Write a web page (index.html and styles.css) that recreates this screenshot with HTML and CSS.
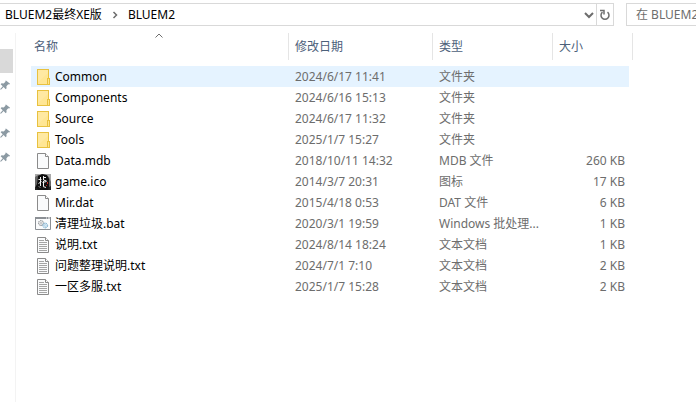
FILE: index.html
```html
<!DOCTYPE html>
<html lang="zh-CN">
<head>
    <meta charset="UTF-8">
    <meta name="viewport" content="width=device-width, initial-scale=1.0">
    <title>BLUEM2</title>
    <link rel="stylesheet" href="styles.css">
</head>
<body>

<!-- Shared icons -->
<svg class="sprite" aria-hidden="true">
    <symbol id="folder" viewBox="0 0 16 16">
        <path d="M2 0h12v9h1v7H2z" fill="#e8c13f"/>
        <path d="M3 1h10v8h-1v6H3z" fill="#ffe694"/>
        <path d="M3 1h10v3L3 13z" fill="#ffe9a2"/>
        <path d="M13 10h1v5h-1z" fill="#ffe48c"/>
    </symbol>
    <symbol id="page" viewBox="0 0 16 16">
        <path d="M2.500 .5h8l3 3v12h-11z" fill="#fafbfc" stroke="#8b8b8b"/>
        <path d="M10.500 .5v3h3" fill="#fff" stroke="#8b8b8b"/>
    </symbol>
    <symbol id="text" viewBox="0 0 16 16">
        <path d="M2.500 .5h8l3 3v12h-11z" fill="#fafbfc" stroke="#8b8b8b"/>
        <path d="M10.500 .5v3h3" fill="#fff" stroke="#8b8b8b"/>
        <path d="M4 3.500h5M4 5.500h8M4 7.500h8M4 9.500h8M4 11.500h8M4 13.500h8" stroke="#a5a5a5" fill="none"/>
    </symbol>
    <symbol id="batch" viewBox="0 0 16 16">
        <path d="M.5 1.500h15v12H.5z" fill="#fafbfc" stroke="#8b8f94"/>
        <path d="M0 1h16v2H0z" fill="#8b8f94"/>
        <path d="M11 2h1M13 2h2" stroke="#fff"/>
        <circle cx="6" cy="7" r="2.500" fill="#eee" stroke="#85898e" stroke-dasharray="1.500 .6"/>
        <circle cx="6" cy="7" r="1" fill="#fff" stroke="#9a9da1" stroke-width=".6"/>
        <circle cx="10.200" cy="9.500" r="2.400" fill="#d8ecf8" stroke="#77a9c8" stroke-dasharray="1.500 .6"/>
        <circle cx="10.200" cy="9.500" r=".9" fill="#fff" stroke="#8fb9d2" stroke-width=".6"/>
    </symbol>
    <symbol id="game" viewBox="0 0 16 16">
        <path d="M0 0h16v16H0z" fill="#aaa"/>
        <path d="M0 3l3-2h8l3 2 2 5v8H0z" fill="#666"/>
        <path d="M3 2l4-2 5 1 2 4v9l2 2H2l-2-2 2-4z" fill="#101010"/>
        <path d="M3.500 5.500h3M5.500 3v9M3.500 9.500l3-2M8 3.500h3M8.500 2v4l3 1M7.500 8.500l4-1M8.500 7v5M8 12.500l3 1M4 12.500l1 1" fill="none" stroke="#f2f2f2"/>
        <path d="M12 8h1v2h-1zM11 11h1v1h-1z" fill="#c3251f"/>
        <path d="M0 13l2 1 1 2H0zM14 13l2-1v4h-3z" fill="#222"/>
    </symbol>
    <symbol id="pin" viewBox="0 0 12 12">
        <path d="M6.500 1l4.500 3.500-1 1-1-.2-2 2 .2 2.200-1 1L4 8.300 1 11.200.3 11l.2-.8L3 7.400.7 5.200l1-1 2.300.2 2-2-.2-.8z" fill="#8c9aa3"/>
    </symbol>
</svg>

<header class="toolbar">
    <nav class="address" aria-label="地址">
        <button type="button" class="crumb">BLUEM2最终XE版</button>
        <svg class="crumb-arrow" viewBox="0 0 6 8" aria-hidden="true"><path d="M1.500 1l3 3-3 3"/></svg>
        <button type="button" class="crumb">BLUEM2</button>
        <button type="button" class="history" aria-label="以前的位置">
            <svg viewBox="0 0 10 8" aria-hidden="true"><path d="M1 2l4 4 4-4"/></svg>
        </button>
        <button type="button" class="refresh" aria-label="刷新">
            <svg viewBox="0 0 12 12" aria-hidden="true"><path d="M8.500 3.200a4 4 0 1 1-5 0M1 1.500h4v4"/></svg>
        </button>
    </nav>
    <input type="text" class="search" aria-label="搜索" placeholder="在 BLUEM2 中搜索">
</header>

<div class="content">
    <aside class="sidebar">
        <div class="current"></div>
        <svg class="pin"><use href="#pin"/></svg>
        <svg class="pin"><use href="#pin"/></svg>
        <svg class="pin"><use href="#pin"/></svg>
        <svg class="pin"><use href="#pin"/></svg>
    </aside>

    <main class="files">
        <table class="file-table">
            <colgroup>
                <col class="col-name">
                <col class="col-date">
                <col class="col-type">
                <col class="col-size">
            </colgroup>
            <thead>
                <tr>
                    <th class="sorted">名称
                        <svg class="sort-arrow" viewBox="0 0 8 5" aria-hidden="true"><path d="M.5 4.500L4 1l3.500 3.500"/></svg>
                    </th>
                    <th>修改日期</th>
                    <th>类型</th>
                    <th>大小</th>
                </tr>
            </thead>
            <tbody>
                <tr class="hovered"><td><span class="name"><svg class="icon"><use href="#folder"/></svg>Common</span></td><td>2024/6/17 11:41</td><td>文件夹</td><td></td></tr>
                <tr><td><span class="name"><svg class="icon"><use href="#folder"/></svg>Components</span></td><td>2024/6/16 15:13</td><td>文件夹</td><td></td></tr>
                <tr><td><span class="name"><svg class="icon"><use href="#folder"/></svg>Source</span></td><td>2024/6/17 11:32</td><td>文件夹</td><td></td></tr>
                <tr><td><span class="name"><svg class="icon"><use href="#folder"/></svg>Tools</span></td><td>2025/1/7 15:27</td><td>文件夹</td><td></td></tr>
                <tr><td><span class="name"><svg class="icon"><use href="#page"/></svg>Data.mdb</span></td><td>2018/10/11 14:32</td><td>MDB 文件</td><td>260 KB</td></tr>
                <tr><td><span class="name"><svg class="icon"><use href="#game"/></svg>game.ico</span></td><td>2014/3/7 20:31</td><td>图标</td><td>17 KB</td></tr>
                <tr><td><span class="name"><svg class="icon"><use href="#page"/></svg>Mir.dat</span></td><td>2015/4/18 0:53</td><td>DAT 文件</td><td>6 KB</td></tr>
                <tr><td><span class="name"><svg class="icon"><use href="#batch"/></svg>清理垃圾.bat</span></td><td>2020/3/1 19:59</td><td>Windows 批处理...</td><td>1 KB</td></tr>
                <tr><td><span class="name"><svg class="icon"><use href="#text"/></svg>说明.txt</span></td><td>2024/8/14 18:24</td><td>文本文档</td><td>1 KB</td></tr>
                <tr><td><span class="name"><svg class="icon"><use href="#text"/></svg>问题整理说明.txt</span></td><td>2024/7/1 7:10</td><td>文本文档</td><td>2 KB</td></tr>
                <tr><td><span class="name"><svg class="icon"><use href="#text"/></svg>一区多服.txt</span></td><td>2025/1/7 15:28</td><td>文本文档</td><td>2 KB</td></tr>
            </tbody>
        </table>
    </main>
</div>

</body>
</html>
```
FILE: styles.css
```css
/* Base */
* {
    box-sizing: border-box;
}

body {
    font-family: "Noto Sans", "Noto Sans CJK SC", sans-serif;
    font-size: 12px;
    line-height: 20px;
    margin: 0;
    min-height: 100vh;
    display: flex;
    flex-direction: column;
    background: #fff;
    color: #000;
}

.sprite {
    display: none;
}

button, input {
    font: inherit;
    color: inherit;
    margin: 0;
    padding: 0;
    background: none;
    border: none;
    border-radius: 0;
}

/* Address bar and search */
.toolbar {
    display: flex;
    gap: 12px;
    padding-top: 3px;
}

.address {
    flex: 1;
    display: flex;
    align-items: center;
    height: 23px;
    padding-left: 5px;
    border: 1px solid #d9d9d9;
    border-left: none;
}

.crumb {
    white-space: nowrap;
}

.crumb-arrow {
    width: 6px;
    height: 8px;
    margin: 0 10px;
    stroke-width: 1.5;
}

.address svg {
    fill: none;
    stroke: #6d6d6d;
}

.history {
    display: flex;
    align-items: center;
    justify-content: center;
    width: 15px;
    height: 21px;
    margin-left: auto;
}

.history svg {
    width: 10px;
    height: 8px;
    stroke-width: 2;
}

.refresh {
    display: flex;
    align-items: center;
    justify-content: center;
    width: 17px;
    height: 21px;
    border-left: 1px solid #d9d9d9;
}

.refresh svg {
    width: 12px;
    height: 12px;
    stroke-width: 1.5;
}

.search {
    width: 70px;
    height: 23px;
    padding-left: 9px;
    border: 1px solid #d9d9d9;
    border-right: none;
}

.search::placeholder {
    color: #6d6d6d;
    opacity: 1;
}

/* Navigation pane */
.content {
    flex: 1;
    display: flex;
    padding-top: 7px;
}

.sidebar {
    width: 16px;
    padding-top: 16px;
    border-right: 1px solid #f3f3f3;
}

.current {
    width: 13px;
    height: 24px;
    background: #d9d9d9;
}

.pin {
    display: block;
    width: 11px;
    height: 12px;
    margin: 6px 0 12px;
}

/* File list */
.files {
    flex: 1;
    padding-left: 15px;
}

.file-table {
    width: 602px;
    table-layout: fixed;
    border-collapse: separate;
    border-spacing: 0;
}

.col-name {
    width: 258px;
}

.col-date {
    width: 144px;
}

.col-type {
    width: 120px;
}

.col-size {
    width: 80px;
}

th {
    height: 27px;
    padding: 0 0 0 6px;
    border-right: 1px solid #e5e5e5;
    color: #4c607a;
    font-weight: normal;
    text-align: left;
}

.sorted {
    position: relative;
    padding-left: 3px;
}

.sort-arrow {
    position: absolute;
    top: 0;
    left: 50%;
    width: 8px;
    height: 5px;
    margin-left: -5px;
    fill: none;
    stroke: #6d6d6d;
}

tbody::before {
    content: "";
    display: block;
    height: 6px;
}

td {
    height: 21px;
    padding: 0 0 0 6px;
    color: #6d6d6d;
    white-space: nowrap;
}

td:first-child {
    padding-left: 4px;
    color: #000;
}

td:last-child {
    padding-right: 4px;
    border-right: 4px solid transparent;
    background-clip: padding-box;
    text-align: right;
}

.hovered td {
    background-color: #e5f3ff;
}

.name {
    display: flex;
    align-items: center;
    gap: 4px;
}

.icon {
    width: 16px;
    height: 16px;
}
```
